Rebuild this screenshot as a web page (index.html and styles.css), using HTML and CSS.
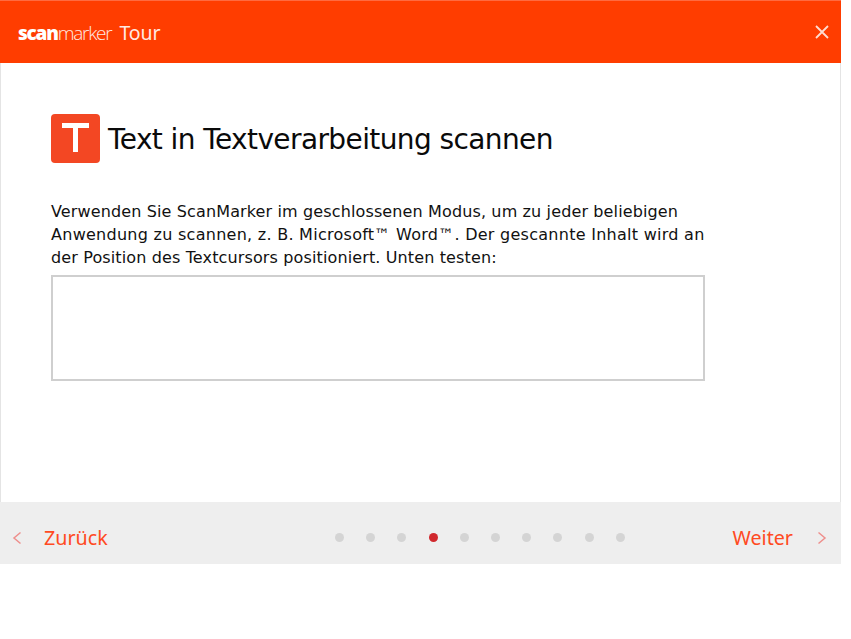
FILE: index.html
```html
<!DOCTYPE html>
<html lang="de">
<head>
<meta charset="utf-8">
<title>scanmarker Tour</title>
<link rel="stylesheet" href="styles.css">
</head>
<body>
<div class="window">
  <header class="titlebar">
    <div class="brand"><span class="logo"><b>scan</b>marker</span><span class="tour">Tour</span></div>
    <svg class="close" width="14" height="14" viewBox="0 0 14 14"><path d="M1 1L13 13M13 1L1 13" stroke="#ffdcd0" stroke-width="1.8" fill="none"/></svg>
  </header>
  <main class="content">
    <div class="heading">
      <div class="badge"><svg width="49" height="49" viewBox="0 0 49 49"><path d="M11 11.500H38M24.500 11.500V38" stroke="#fff" stroke-width="5" fill="none"/></svg></div>
      <h1>Text in Textverarbeitung scannen</h1>
    </div>
    <p class="intro">Verwenden Sie ScanMarker im geschlossenen Modus, um zu jeder beliebigen<br><span class="wide">Anwendung zu scannen, z. B. Microsoft™ Word™. Der gescannte Inhalt wird an</span><br>der Position des Textcursors positioniert. Unten testen:</p>
    <div class="testbox"></div>
  </main>
  <footer class="nav">
    <div class="nav-side">
      <svg class="chev" width="10" height="14" viewBox="0 0 10 14"><path d="M8.500 1.500L2 7L8.500 12.500" stroke="#ee8f8c" stroke-width="1.500" fill="none"/></svg>
      <span class="nav-label">Zurück</span>
    </div>
    <div class="dots">
      <i class="dot"></i><i class="dot"></i><i class="dot"></i><i class="dot active"></i><i class="dot"></i><i class="dot"></i><i class="dot"></i><i class="dot"></i><i class="dot"></i><i class="dot"></i>
    </div>
    <div class="nav-side">
      <span class="nav-label">Weiter</span>
      <svg class="chev" width="10" height="14" viewBox="0 0 10 14"><path d="M1.500 1.500L8 7L1.500 12.500" stroke="#ee8f8c" stroke-width="1.500" fill="none"/></svg>
    </div>
  </footer>
</div>
</body>
</html>
```
FILE: styles.css
```css
* { box-sizing: border-box; }
html, body { margin: 0; padding: 0; background: #fff; }
body { font-family: "DejaVu Sans", sans-serif; }
.window { width: 841px; height: 564px; display: flex; flex-direction: column; }
.titlebar {
  height: 63px; background: #ff3d00; border-top: 1px solid #ff6a40;
  display: flex; align-items: center; justify-content: space-between;
  padding: 0 12px 0 18px; color: #ffe9e2;
}
.brand { display: flex; align-items: baseline; gap: 8px; }
.logo { font-family: "Open Sans", sans-serif; font-size: 19px; letter-spacing: -1.25px; font-weight: 300; }
.logo b { font-weight: 800; color: #fff; }
.tour { font-family: "Noto Sans", sans-serif; font-size: 19.500px; letter-spacing: -0.1px; }
.close { display: block; }
.content { flex: 1; padding: 51px 0 0 51px; border-left: 1px solid #e4e4e4; border-right: 1px solid #e4e4e4; margin: 0; }
.heading { display: flex; align-items: center; gap: 8px; margin-left: -1px; }
.badge { width: 49px; height: 49px; background: #f34723; border-radius: 4px; }
.badge svg { display: block; }
h1 { margin: 2px 0 0; font-family: "DejaVu Sans", sans-serif; font-weight: 400; font-size: 28px; letter-spacing: -0.6px; color: #0a0a0a; }
.intro { margin: 37px 0 0 -1px; width: 700px; font-family: "DejaVu Sans", sans-serif; font-size: 16px; letter-spacing: 0.13px; line-height: 23px; color: #111; white-space: nowrap; }
.wide { letter-spacing: 0.27px; }
.testbox { width: 654px; height: 106px; margin: 6px 0 0 -1px; border: 2px solid #cfcfcf; background: #fff; }
.nav {
  height: 62px; background: #eeeeee; display: flex; align-items: center; justify-content: space-between;
  padding: 9px 14px 0 12px; position: relative;
}
.nav-side { display: flex; align-items: center; gap: 22px; }
.nav-side:last-child { gap: 24px; }
.nav-label { font-family: "Noto Sans", sans-serif; font-size: 19.700px; color: #ff4a22; }
.chev { display: block; }
.dots { display: flex; gap: 22.200px; position: absolute; left: 335px; top: 31px; }
.dot { display: block; width: 9px; height: 9px; border-radius: 50%; background: #d4d4d4; }
.dot.active { background: #d0282d; }
```
